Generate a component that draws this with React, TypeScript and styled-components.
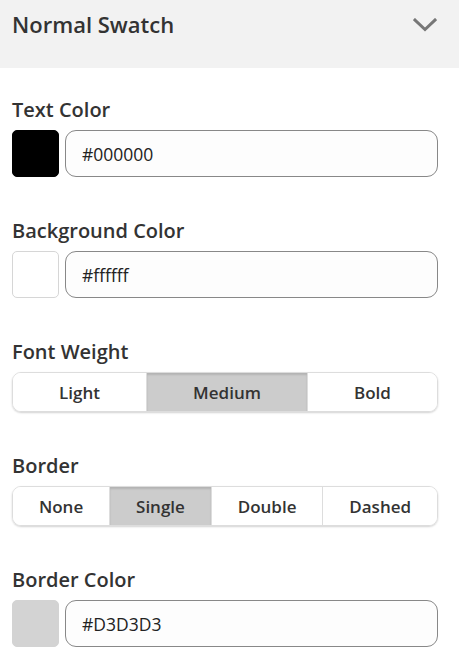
import { useState } from "react";
import styled, { createGlobalStyle } from "styled-components";

const GlobalStyle = createGlobalStyle`
  body {
    margin: 0;
    background: #ffffff;
    font-family: "Segoe UI", "Open Sans", "Noto Sans", sans-serif;
    color: #333333;
  }
  * {
    box-sizing: border-box;
  }
`;

const Panel = styled.div`
  width: 459px;
  display: flex;
  flex-direction: column;
`;

const Header = styled.div`
  height: 68px;
  background: #f2f2f2;
  display: flex;
  align-items: flex-start;
  justify-content: space-between;
  padding: 8px 22px 0 12px;
`;

const HeaderTitle = styled.h2`
  margin: 0;
  font-size: 22px;
  line-height: 32px;
  font-weight: 600;
  color: #333333;
`;

const Chevron = styled.svg`
  margin-top: 10px;
`;

const Body = styled.div`
  display: flex;
  flex-direction: column;
  padding: 30px 21px 0 12px;
  gap: 42px;
`;

const Field = styled.div`
  display: flex;
  flex-direction: column;
  gap: 9px;
`;

const Label = styled.div`
  font-size: 20px;
  line-height: 23px;
  font-weight: 600;
  color: #333333;
`;

const ColorRow = styled.div`
  display: flex;
  gap: 6px;
  height: 47px;
`;

const Swatch = styled.div<{ $color: string }>`
  width: 47px;
  flex: none;
  border-radius: 5px;
  background: ${(p) => p.$color};
  border: 1px solid ${(p) => (p.$color === "#ffffff" ? "#d6d6d6" : p.$color)};
`;

const HexInput = styled.input`
  flex: 1;
  min-width: 0;
  border: 1px solid #888888;
  border-radius: 11px;
  background: #fdfdfd;
  padding: 0 16px;
  font-family: inherit;
  font-size: 17.5px;
  color: #222222;
  outline: none;
`;

const Segmented = styled.div`
  display: flex;
  height: 40px;
  border: 1px solid #dddddd;
  border-radius: 9px;
  overflow: hidden;
  box-shadow: 0 1px 2px rgba(0, 0, 0, 0.18);
`;

const Segment = styled.button<{ $active: boolean }>`
  flex: 1 1 auto;
  padding: 0 10px;
  border: none;
  border-left: 1px solid #dddddd;
  background: ${(p) => (p.$active ? "#cccccc" : "#ffffff")};
  box-shadow: ${(p) => (p.$active ? "inset 0 2px 2px rgba(0, 0, 0, 0.12)" : "none")};
  font-family: inherit;
  font-size: 17px;
  font-weight: 550;
  color: #333333;
  cursor: pointer;

  &:first-child {
    border-left: none;
  }
`;

const ColorField = ({ label, value }: { label: string; value: string }) => (
  <Field>
    <Label>{label}</Label>
    <ColorRow>
      <Swatch $color={value.toLowerCase() === "#ffffff" ? "#ffffff" : value} />
      <HexInput defaultValue={value} />
    </ColorRow>
  </Field>
);

const SegmentField = ({
  label,
  options,
  initial,
}: {
  label: string;
  options: string[];
  initial: string;
}) => {
  const [selected, setSelected] = useState(initial);
  return (
    <Field>
      <Label>{label}</Label>
      <Segmented>
        {options.map((opt) => (
          <Segment
            key={opt}
            $active={opt === selected}
            onClick={() => setSelected(opt)}
          >
            {opt}
          </Segment>
        ))}
      </Segmented>
    </Field>
  );
};

const App = () => {
  return (
    <Panel>
      <GlobalStyle />
      <Header>
        <HeaderTitle>Normal Swatch</HeaderTitle>
        <Chevron width="24" height="14" viewBox="0 0 24 14" fill="none">
          <path
            d="M2 2 L12 11.5 L22 2"
            stroke="#777777"
            strokeWidth="3"
            strokeLinecap="square"
          />
        </Chevron>
      </Header>
      <Body>
        <ColorField label="Text Color" value="#000000" />
        <ColorField label="Background Color" value="#ffffff" />
        <SegmentField
          label="Font Weight"
          options={["Light", "Medium", "Bold"]}
          initial="Medium"
        />
        <SegmentField
          label="Border"
          options={["None", "Single", "Double", "Dashed"]}
          initial="Single"
        />
        <ColorField label="Border Color" value="#D3D3D3" />
      </Body>
    </Panel>
  );
};

export default App;
